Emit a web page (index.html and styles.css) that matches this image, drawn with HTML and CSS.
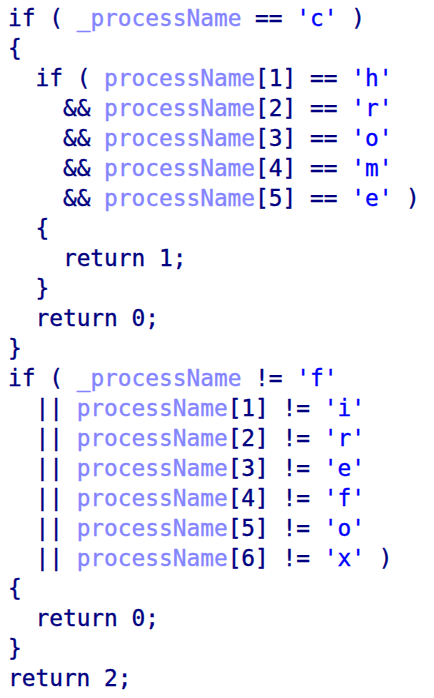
FILE: index.html
```html
<!DOCTYPE html>
<html>
<head>
<meta charset="utf-8">
<link rel="stylesheet" href="styles.css">
</head>
<body>
<pre class="code"><span class="k">if</span> <span class="k">(</span> <span class="v">_processName</span> <span class="k">==</span> <span class="c">'c'</span> <span class="k">)</span>
<span class="k">{</span>
  <span class="k">if</span> <span class="k">(</span> <span class="v">processName</span><span class="k">[1]</span> <span class="k">==</span> <span class="c">'h'</span>
    <span class="k">&amp;&amp;</span> <span class="v">processName</span><span class="k">[2]</span> <span class="k">==</span> <span class="c">'r'</span>
    <span class="k">&amp;&amp;</span> <span class="v">processName</span><span class="k">[3]</span> <span class="k">==</span> <span class="c">'o'</span>
    <span class="k">&amp;&amp;</span> <span class="v">processName</span><span class="k">[4]</span> <span class="k">==</span> <span class="c">'m'</span>
    <span class="k">&amp;&amp;</span> <span class="v">processName</span><span class="k">[5]</span> <span class="k">==</span> <span class="c">'e'</span> <span class="k">)</span>
  <span class="k">{</span>
    <span class="k">return 1;</span>
  <span class="k">}</span>
  <span class="k">return 0;</span>
<span class="k">}</span>
<span class="k">if</span> <span class="k">(</span> <span class="v">_processName</span> <span class="k">!=</span> <span class="c">'f'</span>
  <span class="k">||</span> <span class="v">processName</span><span class="k">[1]</span> <span class="k">!=</span> <span class="c">'i'</span>
  <span class="k">||</span> <span class="v">processName</span><span class="k">[2]</span> <span class="k">!=</span> <span class="c">'r'</span>
  <span class="k">||</span> <span class="v">processName</span><span class="k">[3]</span> <span class="k">!=</span> <span class="c">'e'</span>
  <span class="k">||</span> <span class="v">processName</span><span class="k">[4]</span> <span class="k">!=</span> <span class="c">'f'</span>
  <span class="k">||</span> <span class="v">processName</span><span class="k">[5]</span> <span class="k">!=</span> <span class="c">'o'</span>
  <span class="k">||</span> <span class="v">processName</span><span class="k">[6]</span> <span class="k">!=</span> <span class="c">'x'</span> <span class="k">)</span>
<span class="k">{</span>
  <span class="k">return 0;</span>
<span class="k">}</span>
<span class="k">return 2;</span></pre>
</body>
</html>
```

FILE: styles.css
```css
html, body {
  margin: 0;
  padding: 0;
  background: #ffffff;
}

.code {
  margin: 0;
  padding: 3px 0 0 8px;
  font-family: "DejaVu Sans Mono", "Liberation Mono", monospace;
  font-size: 22.8px;
  line-height: 30px;
  color: #000080;
  white-space: pre;
  -webkit-text-stroke: 0.35px currentColor;
}

.k {
  color: #000080;
}

.v {
  color: #8484ff;
}

.c {
  color: #0000ff;
}
```
